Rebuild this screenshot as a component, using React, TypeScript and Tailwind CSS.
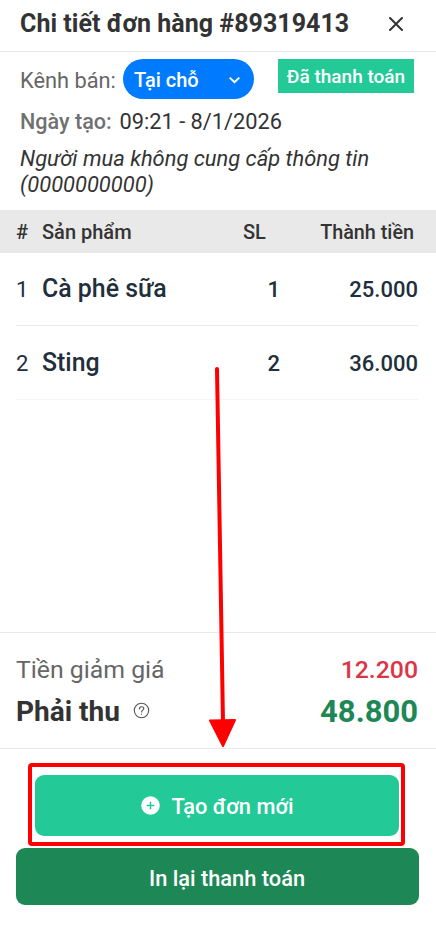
import React from 'react';

interface OrderItem {
  id: number;
  name: string;
  quantity: number;
  total: string;
}

const items: OrderItem[] = [
  { id: 1, name: 'Cà phê sữa', quantity: 1, total: '25.000' },
  { id: 2, name: 'Sting', quantity: 2, total: '36.000' },
];

const Header = () => (
  <header className="flex h-[52px] items-center justify-between border-b border-[#e9e9e9] pr-8 pl-5">
    <h1 className="pb-1 text-[25px] font-bold tracking-[0.03px] whitespace-nowrap">Chi tiết đơn hàng #89319413</h1>
    <button aria-label="Đóng" className="pb-1">
      <svg width="16" height="16" viewBox="0 0 16 16" fill="none" stroke="#333" strokeWidth="2" strokeLinecap="round">
        <path d="M2 2l12 12M14 2L2 14" />
      </svg>
    </button>
  </header>
);

const OrderInfo = () => (
  <section className="flex h-[158px] flex-col px-5 pt-[7px]">
    <div className="flex items-start">
      <span className="w-[103px] pt-[6px] text-[21.8px] leading-8 whitespace-nowrap text-[#666]">Kênh bán:</span>
      <button className="flex h-10 w-[131px] items-center justify-between rounded-full bg-[#007bff] pr-[13px] pl-[11px] text-[20px] font-medium text-white">
        <span className="pt-0.5 whitespace-nowrap">Tại chỗ</span>
        <svg className="mt-0.5" width="13" height="8" viewBox="0 0 13 8" fill="none" stroke="#fff" strokeWidth="2">
          <path d="M1.7 1.6l4.8 4.6 4.8-4.6" />
        </svg>
      </button>
      <span className="ml-6 flex h-[34px] w-[136px] items-center justify-center bg-[#23c997] pt-[3px] text-[19px] font-medium whitespace-nowrap text-white">
        Đã thanh toán
      </span>
    </div>
    <div className="mt-[7px] flex text-[21.8px] leading-8 whitespace-nowrap">
      <span className="w-[99.5px] text-[21.6px] font-medium text-[#707070]">Ngày tạo:</span>
      <span>09:21 - 8/1/2026</span>
    </div>
    <p className="mt-2 text-[21.9px] leading-[25.5px] whitespace-nowrap italic">
      Người mua không cung cấp thông tin
      <br />
      (0000000000)
    </p>
  </section>
);

const ItemTable = () => (
  <section className="h-[422px]">
    <div className="flex h-[43px] items-center bg-[#e9e9e9] px-4 pt-px text-[20px] font-medium whitespace-nowrap">
      <span className="w-[26px]">#</span>
      <span className="w-[201px]">Sản phẩm</span>
      <span>SL</span>
      <span className="ml-auto pt-0.5 pr-[6px] text-[19.8px]">Thành tiền</span>
    </div>
    <div className="pr-[18px] pl-4 text-[#212f3d]">
      {items.map((item) => (
        <div key={item.id} className="flex h-[73px] items-center border-b border-[#e8e9ed] text-[22px] last:h-[74px] last:border-[#f5f5f5]">
          <span className="w-[26px] pt-px">{item.id}</span>
          <span className="w-[200px] text-[24.9px] font-medium">{item.name}</span>
          <span className="w-[38px] pt-px text-right font-medium">{item.quantity}</span>
          <span className="ml-auto pt-px font-medium">{item.total}</span>
        </div>
      ))}
    </div>
  </section>
);

const Totals = () => (
  <section className="flex h-[117px] flex-col border-y border-[#e8e9ed] pt-[16px] pr-[18px] pl-4">
    <div className="flex h-[42px] items-center justify-between text-[24.8px]">
      <span className="pb-px text-[#666]">Tiền giảm giá</span>
      <span className="pb-px font-medium text-[#dc3545]">12.200</span>
    </div>
    <div className="flex h-[42px] items-center text-[28px] font-bold">
      <span>Phải thu</span>
      <svg className="mb-[3px] ml-[13px]" width="17" height="17" viewBox="0 0 17 17" fill="none" stroke="#555" strokeWidth="1.1" strokeLinecap="round">
        <circle cx="8.5" cy="8.5" r="7.2" />
        <path d="M6.4 7c0-3 4.4-3 4.4-.4 0 1.5-2.2 1.6-2.2 3.3M8.6 12v.2" />
      </svg>
      <span className="ml-auto text-[31px] text-[#1d8755]">48.800</span>
    </div>
  </section>
);

const Actions = () => (
  <footer className="flex flex-col items-start pt-[14px]">
    <div className="ml-7 h-[83px] w-[377px] rounded-[4px] border-4 border-[#f00] pt-2 pr-[2px] pl-[3px]">
      <button className="flex h-[61px] w-full items-center justify-center rounded-[9px] bg-[#23c997] pt-1 pl-px text-[21.8px] font-medium text-white">
        <svg className="mr-[11px] mb-1" width="19" height="19" viewBox="0 0 19 19">
          <circle cx="9.5" cy="9.5" r="9.3" fill="#fff" />
          <path d="M9.5 5.7v7.6M5.7 9.5h7.6" stroke="#23c997" strokeWidth="1.5" />
        </svg>
        Tạo đơn mới
      </button>
    </div>
    <button className="mt-[2px] ml-[15.5px] h-[57px] w-[403px] rounded-[9px] bg-[#1d8755] pt-[5px] pl-[20px] text-[21.8px] font-medium text-white">
      In lại thanh toán
    </button>
  </footer>
);

// Arrow drawn over the page, pointing at the highlighted button
const GuideArrow = () => (
  <svg className="pointer-events-none absolute top-0 left-0" width="436" height="928" viewBox="0 0 436 928">
    <path d="M217 369L223 722" stroke="#f00" strokeWidth="4" strokeLinecap="round" />
    <path d="M210 720.5L235 720L223 746Z" fill="#f00" stroke="#f00" strokeWidth="2" strokeLinejoin="round" />
  </svg>
);

const App = () => {
  return (
    <main className="relative h-[928px] w-[436px] overflow-hidden bg-white font-[Roboto,sans-serif] text-[#333]">
      <Header />
      <OrderInfo />
      <ItemTable />
      <Totals />
      <Actions />
      <GuideArrow />
    </main>
  );
};

export default App;
